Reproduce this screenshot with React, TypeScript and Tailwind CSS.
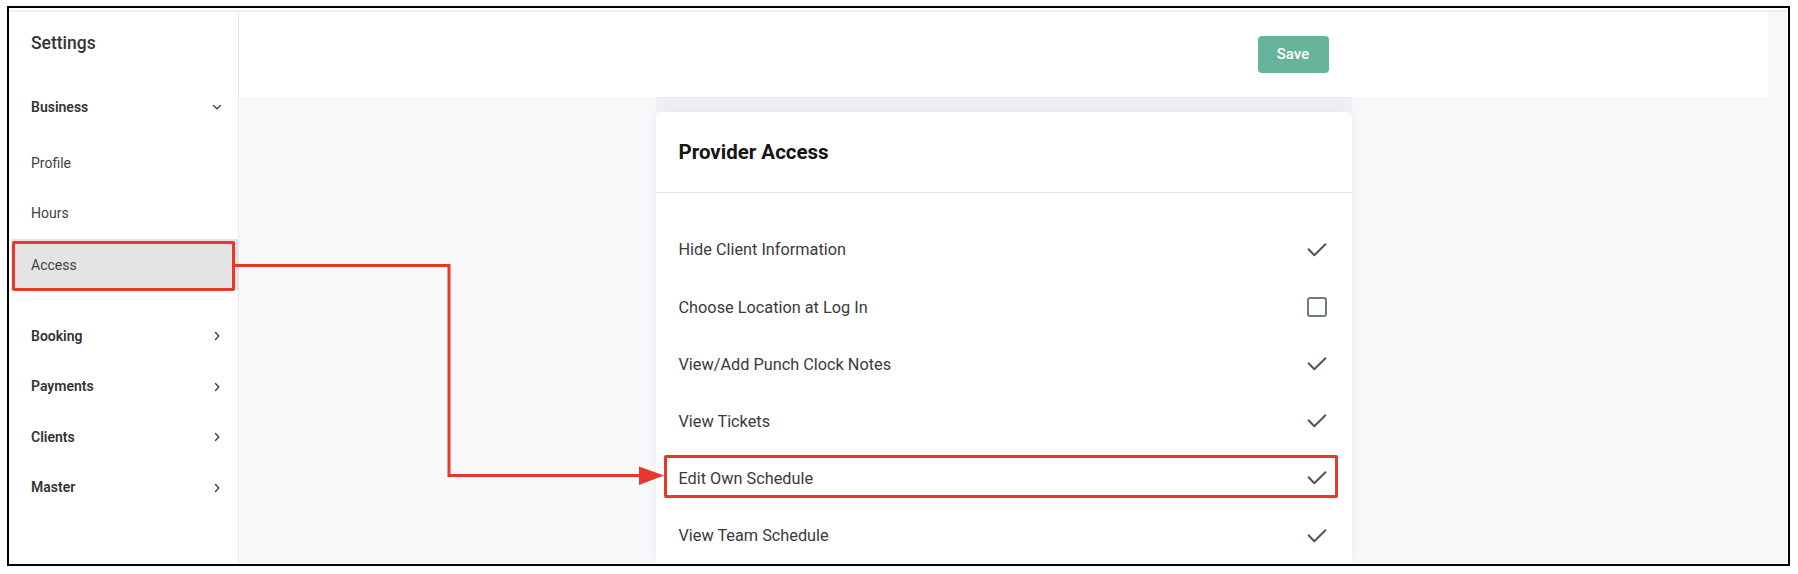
import React from "react";

const font = { fontFamily: "Roboto, 'Noto Sans', Arial, sans-serif" };

function ChevronDown() {
  return (
    <svg width="10" height="10" viewBox="0 0 10 10" fill="none">
      <path d="M1.5 3.5 L5 6.8 L8.5 3.5" stroke="#444" strokeWidth="1.4" strokeLinecap="round" strokeLinejoin="round" />
    </svg>
  );
}

function ChevronRight() {
  return (
    <svg width="10" height="10" viewBox="0 0 10 10" fill="none">
      <path d="M3.5 1.5 L6.8 5 L3.5 8.5" stroke="#444" strokeWidth="1.4" strokeLinecap="round" strokeLinejoin="round" />
    </svg>
  );
}

function Check() {
  return (
    <svg width="20" height="20" viewBox="0 0 20 20" fill="none">
      <path d="M1.6 9.2 L7.3 15.2 L18.4 4.2" stroke="#4b5661" strokeWidth="2" strokeLinecap="round" strokeLinejoin="round" />
    </svg>
  );
}

function Box() {
  return <div className="w-[20px] h-[20px] rounded-[3px] border-2 border-[#6e7b87] bg-white" />;
}

const sections = ["Booking", "Payments", "Clients", "Master"];

const permissions: { label: string; on: boolean }[] = [
  { label: "Hide Client Information", on: true },
  { label: "Choose Location at Log In", on: false },
  { label: "View/Add Punch Clock Notes", on: true },
  { label: "View Tickets", on: true },
  { label: "Edit Own Schedule", on: true },
  { label: "View Team Schedule", on: true },
];

export default function App() {
  return (
    <div className="relative w-[1798px] h-[574px] bg-white overflow-hidden" style={font}>
      <div className="pt-[6px] pl-[7px]">
        <div className="w-[1783px] h-[560px] border-2 border-black bg-[#f7f8fa] flex flex-col overflow-hidden">
          <div className="h-[4px] bg-white border-b-2 border-[#eeeff1]" />
          <div className="flex flex-1 min-h-0">
            {/* sidebar */}
            <aside className="w-[230px] shrink-0 bg-white border-r border-[#ebebeb] flex flex-col">
              <div className="h-[62px] flex items-center pl-[22px] text-[17.5px] font-medium text-[#333]">Settings</div>
              <div className="h-[64px] flex items-center justify-between pl-[22px] pr-[16px] pt-[2px] text-[14px] font-semibold text-[#333]">
                <span>Business</span>
                <ChevronDown />
              </div>
              <div className="h-[49px] flex items-center pl-[22px] pt-[1px] text-[14px] text-[#3f3f3f]">Profile</div>
              <div className="h-[52px] flex items-center pl-[22px] pt-[1px] text-[14px] text-[#3f3f3f]">Hours</div>
              <div className="h-[51px] ml-[2px] flex items-center pl-[20px] pt-[1px] text-[14px] text-[#3f3f3f] bg-[#e4e4e4]">
                Access
              </div>
              <div className="mt-[20px] flex flex-col">
                {sections.map((s) => (
                  <div
                    key={s}
                    className="h-[50.5px] flex items-center justify-between pl-[22px] pr-[16px] pt-[2px] text-[14px] font-semibold text-[#333]"
                  >
                    <span>{s}</span>
                    <ChevronRight />
                  </div>
                ))}
              </div>
            </aside>

            {/* main */}
            <main className="flex-1 flex flex-col pr-[20px] min-w-0">
              <div className="h-[85px] shrink-0 bg-white flex justify-center">
                <div className="w-[696px] flex items-center justify-end pr-[23px]">
                  <button className="w-[71px] h-[37px] rounded-[4px] bg-[#67b39c] text-white text-[15px] font-medium">
                    Save
                  </button>
                </div>
              </div>
              <div className="h-[15px] w-[696px] mx-auto shrink-0 bg-gradient-to-b from-[#eceef1] to-[#f1f2f5]" />
              <section className="w-[696px] mx-auto flex-1 bg-white rounded-t-[8px] shadow-[0_0_14px_rgba(30,40,60,0.05)]">
                <div className="h-[81px] flex items-center pl-[23px] border-b border-[#e3e5e8] text-[20.5px] font-bold text-[#141414]">
                  Provider Access
                </div>
                <div className="pt-[28px]">
                  {permissions.map((p) => (
                    <div
                      key={p.label}
                      className="h-[57.2px] flex items-center justify-between pl-[23px] pr-[25px] text-[16.3px] text-[#3a3a3a]"
                    >
                      <span className="pt-[2px]">{p.label}</span>
                      {p.on ? <Check /> : <Box />}
                    </div>
                  ))}
                </div>
              </section>
            </main>
          </div>
        </div>
      </div>

      {/* callout highlights */}
      <div className="absolute left-[12px] top-[241px] w-[223px] h-[50px] border-[3px] border-[#e8372b] rounded-[2px] pointer-events-none" />
      <div className="absolute left-[664px] top-[455px] w-[674px] h-[43px] border-[3px] border-[#e8372b] rounded-[2px] pointer-events-none" />
      <svg className="absolute left-0 top-0 pointer-events-none" width="1798" height="574" viewBox="0 0 1798 574">
        <polyline
          points="235,265.5 449,265.5 449,475.5 642,475.5"
          fill="none"
          stroke="#e8372b"
          strokeWidth="3"
          strokeLinejoin="miter"
        />
        <polygon points="639,466.5 664,475.5 639,485" fill="#e8372b" />
      </svg>
    </div>
  );
}
